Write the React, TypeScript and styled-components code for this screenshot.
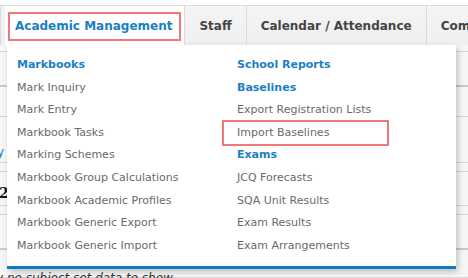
import React from "react";
import styled, { createGlobalStyle } from "styled-components";

const GlobalStyle = createGlobalStyle`
  html, body {
    margin: 0;
    padding: 0;
    background: #ffffff;
  }
  body {
    font-family: "DejaVu Sans", Verdana, sans-serif;
    overflow: hidden;
  }
`;

const Page = styled.div`
  position: relative;
  width: 468px;
  height: 278px;
  overflow: hidden;
  padding-top: 5px;
  box-sizing: border-box;
`;

const NavBar = styled.nav`
  display: flex;
  height: 39px;
  border-top: 1px solid #dcdcdc;
  background: linear-gradient(#f4f4f4, #efefef);
`;

const Tab = styled.div<{ $stub?: boolean }>`
  display: flex;
  align-items: center;
  padding: ${(p) => (p.$stub ? "0" : "0 14px")};
  width: ${(p) => (p.$stub ? "3px" : "auto")};
  margin-right: ${(p) => (p.$stub ? "4px" : "0")};
  border-right: 1px solid #dadada;
  font-size: 12px;
  font-weight: bold;
  color: #444;
  white-space: nowrap;
`;

const ActiveTab = styled.div`
  display: flex;
  align-items: center;
  padding: 0 3px;
  background: #fff;
  border-right: 1px solid #dadada;
  position: relative;
  z-index: 3;
  height: 39px;
`;

const Highlight = styled.span`
  display: flex;
  align-items: center;
  height: 25px;
  margin-top: 1px;
  padding: 0 7px 0 5px;
  border: 2px solid #f07878;
  font-size: 12px;
  font-weight: bold;
  color: #1b7fc4;
  white-space: nowrap;
`;

const Content = styled.div`
  background: #f6f6f6;
`;

const Row = styled.div<{ $h: number; $thick?: boolean }>`
  display: flex;
  align-items: flex-end;
  height: ${(p) => p.$h}px;
  border-bottom: ${(p) => (p.$thick ? "2px solid #cacaca" : "1px solid #d6d6d6")};
  box-sizing: border-box;
  font-size: 12px;
`;

const EdgeLink = styled.span`
  color: #1b7fc4;
  margin-left: -3px;
  padding-bottom: 3px;
`;

const EdgeNumber = styled.span`
  font-family: "DejaVu Serif", serif;
  font-weight: bold;
  font-size: 14px;
  color: #111;
  margin-left: -1px;
  padding-bottom: 4px;
`;

const EmptyNote = styled.span`
  font-style: italic;
  color: #333;
  margin-left: -4px;
  font-size: 12px;
  margin-bottom: -8px;
`;

const Dropdown = styled.div`
  position: absolute;
  left: 7px;
  top: 45px;
  width: 449px;
  height: 224px;
  box-sizing: border-box;
  background: #fff;
  border-bottom: 3px solid #0b7bc4;
  box-shadow: 2px 3px 6px rgba(0, 0, 0, 0.22);
  padding: 9px 10px 0;
  display: grid;
  grid-template-columns: 220px 1fr;
  z-index: 2;
`;

const Column = styled.div`
  display: flex;
  flex-direction: column;
`;

const Heading = styled.div`
  height: 22.6px;
  line-height: 22.6px;
  font-size: 11px;
  font-weight: bold;
  color: #1b7fc4;
`;

const Item = styled.div<{ $marked?: boolean }>`
  height: 22.6px;
  line-height: 22.6px;
  font-size: 11px;
  color: #6a6a6a;
  white-space: nowrap;
  position: relative;
  ${(p) =>
    p.$marked &&
    `
    &::after {
      content: "";
      position: absolute;
      left: -15px;
      top: -2px;
      width: 167px;
      height: 26px;
      box-sizing: border-box;
      border: 2px solid #f07878;
    }
  `}
`;

type Entry = { label: string; heading?: boolean; marked?: boolean };

const left: Entry[] = [
  { label: "Markbooks", heading: true },
  { label: "Mark Inquiry" },
  { label: "Mark Entry" },
  { label: "Markbook Tasks" },
  { label: "Marking Schemes" },
  { label: "Markbook Group Calculations" },
  { label: "Markbook Academic Profiles" },
  { label: "Markbook Generic Export" },
  { label: "Markbook Generic Import" },
];

const right: Entry[] = [
  { label: "School Reports", heading: true },
  { label: "Baselines", heading: true },
  { label: "Export Registration Lists" },
  { label: "Import Baselines", marked: true },
  { label: "Exams", heading: true },
  { label: "JCQ Forecasts" },
  { label: "SQA Unit Results" },
  { label: "Exam Results" },
  { label: "Exam Arrangements" },
];

const renderEntries = (entries: Entry[]) =>
  entries.map((e) =>
    e.heading ? (
      <Heading key={e.label}>{e.label}</Heading>
    ) : (
      <Item key={e.label} $marked={e.marked}>
        {e.label}
      </Item>
    )
  );

export default function App() {
  return (
    <>
      <GlobalStyle />
      <Page>
        <NavBar>
          <Tab $stub />
          <ActiveTab>
            <Highlight>Academic Management</Highlight>
          </ActiveTab>
          <Tab>Staff</Tab>
          <Tab>Calendar / Attendance</Tab>
          <Tab>Communication</Tab>
        </NavBar>
        <Content>
          <Row $h={7} />
          <Row $h={35} $thick />
          <Row $h={30} />
          <Row $h={46}>
            <EdgeLink>y</EdgeLink>
          </Row>
          <Row $h={9} />
          <Row $h={34}>
            <EdgeNumber>2</EdgeNumber>
          </Row>
          <Row $h={9} />
          <Row $h={35} $thick />
          <Row $h={28}>
            <EmptyNote>y no subject set data to show</EmptyNote>
          </Row>
        </Content>
        <Dropdown>
          <Column>{renderEntries(left)}</Column>
          <Column>{renderEntries(right)}</Column>
        </Dropdown>
      </Page>
    </>
  );
}
